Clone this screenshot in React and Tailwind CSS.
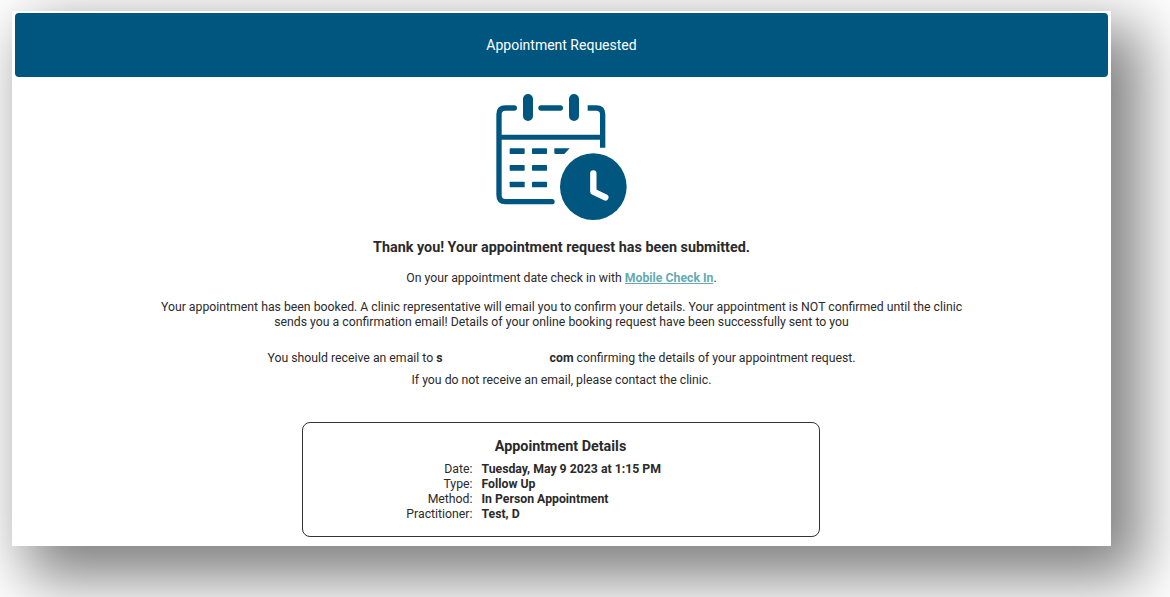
const details = [
  ["Date:", "Tuesday, May 9 2023 at 1:15 PM"],
  ["Type:", "Follow Up"],
  ["Method:", "In Person Appointment"],
  ["Practitioner:", "Test, D"],
];

const CalendarIcon = () => (
  <svg viewBox="5 0 540 450" className="block w-[180px] h-[150px]" fill="none">
    <g stroke="#00567f">
      <path d="M132 84H105Q86 84 86 103V345Q86 365 105 365H245" strokeWidth="16" strokeLinecap="round" />
      <path d="M352 84H378Q397 84 397 103V203" strokeWidth="16" />
      <path d="M86 172H397" strokeWidth="15" />
      <path d="M173 57V108M311 57V108" strokeWidth="30" strokeLinecap="round" />
      <path d="M212 84H270" strokeWidth="16" strokeLinecap="round" />
    </g>
    <g fill="#00567f">
      <rect x="118" y="205" width="45" height="17" rx="2" />
      <rect x="185" y="205" width="45" height="17" rx="2" />
      <path d="M252 205H298L282 222H256Q252 222 252 218Z" />
      <rect x="118" y="255" width="45" height="17" rx="2" />
      <rect x="185" y="255" width="45" height="17" rx="2" />
      <rect x="118" y="305" width="45" height="17" rx="2" />
      <rect x="185" y="305" width="45" height="17" rx="2" />
      <circle cx="369" cy="320" r="100" />
    </g>
    <path d="M369 280V335L405 352" stroke="#fff" strokeWidth="19" strokeLinecap="round" strokeLinejoin="round" />
  </svg>
);

export default function App() {
  return (
    <div className="w-[1170px] h-[597px] overflow-hidden bg-white pl-3 pt-[11px] font-['Roboto',sans-serif] text-[12.28px] leading-[15px] text-[#2a2a2a]">
      <div className="w-[1099px] h-[535px] bg-white flex flex-col items-center shadow-[22px_24px_56px_8px_rgba(0,0,0,0.5)] overflow-hidden">
        <div className="w-[1093px] h-[64px] mt-[2px] shrink-0 rounded-[4px] bg-[#00567f] flex items-center justify-center text-[14px] text-white">
          Appointment Requested
        </div>
        <div className="mt-[3px]">
          <CalendarIcon />
        </div>
        <h1 className="mt-[9px] text-[14.35px] leading-[18px] font-bold">
          Thank you! Your appointment request has been submitted.
        </h1>
        <p className="mt-[14px]">
          On your appointment date check in with{" "}
          <a className="font-bold text-[#66abaf] underline">Mobile Check In</a>.
        </p>
        <p className="mt-[14px] w-[810px] text-center">
          Your appointment has been booked. A clinic representative will email you to confirm your details. Your appointment is NOT confirmed until the clinic sends you a confirmation email! Details of your online booking request have been successfully sent to you
        </p>
        <p className="mt-[21px]">
          You should receive an email to <b>s</b>
          <span className="inline-block w-[107px]"></span>
          <b>com</b> confirming the details of your appointment request.
        </p>
        <p className="mt-[7px]">If you do not receive an email, please contact the clinic.</p>
        <div className="mt-[34px] -ml-[2px] w-[518px] h-[115px] shrink-0 rounded-[8px] border border-[#333] pt-[15px]">
          <h2 className="text-center text-[14.35px] leading-[18px] font-bold">Appointment Details</h2>
          <dl className="mt-[6px] grid grid-cols-[170px_1fr] gap-x-[9px]">
            {details.map(([label, value]) => (
              <div key={label} className="contents">
                <dt className="text-right">{label}</dt>
                <dd className="font-bold">{value}</dd>
              </div>
            ))}
          </dl>
        </div>
      </div>
    </div>
  );
}
